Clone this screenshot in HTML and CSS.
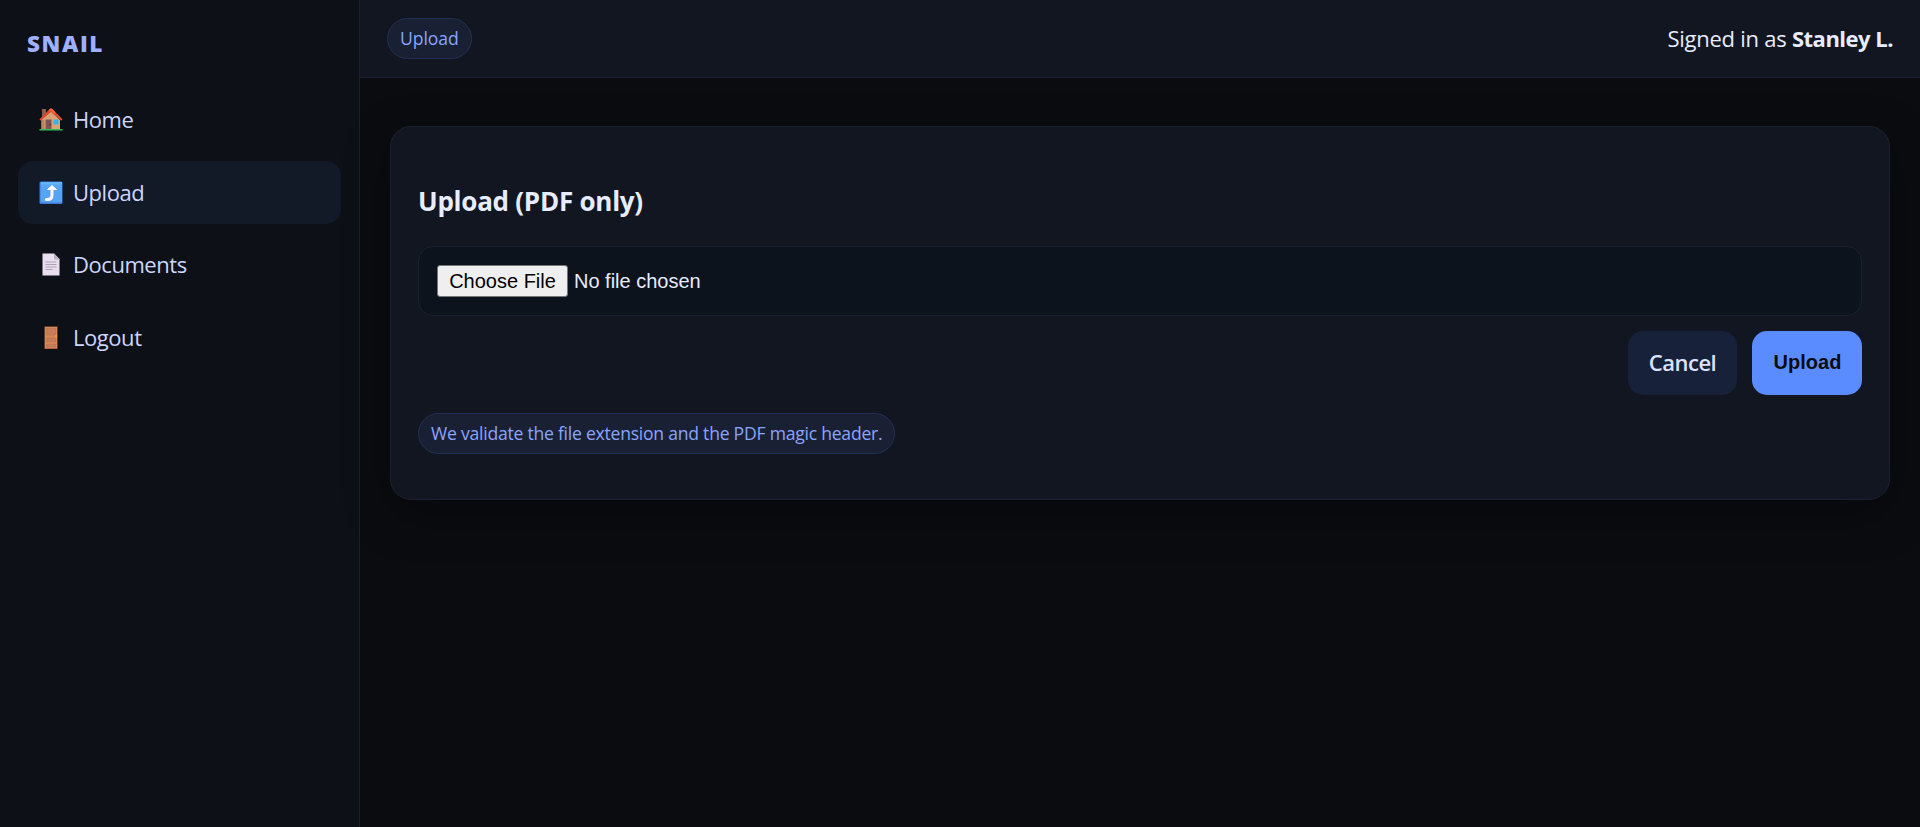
FILE: index.html
```html
<!DOCTYPE html>
<html lang="en">
<head>
  <meta charset="UTF-8">
  <title>Snail - Upload</title>
  <link rel="stylesheet" href="styles.css">
</head>
<body>
  <div class="layout">
    <aside class="sidebar">
      <div class="brand">SNAIL</div>
      <nav class="nav">
        <a class="home" href="#">
          <svg viewBox="0 0 24 24"><path fill="#8a5d4c" d="M3 1h4v9H3z"/><path fill="#d9a377" d="M2.5 11.500 12 3l9 9v9.500H2.500z"/><path fill="#b98263" d="M2.500 12h3v9.500h-3z"/><path fill="#e2472f" d="M.5 11.200 11 .8q1-.8 2 0l10.500 10.400-1.200 1.600L12 4 1.700 12.800z"/><path fill="#f8643d" d="M9.500 2.300 11 .8q1-.8 2 0l3.500 3.500-1 2L12 3z"/><path fill="#805453" d="M6.500 11.500h6v9.800h-6z"/><circle cx="11.300" cy="16.500" r=".7" fill="#432d2f"/><path fill="#35b5ee" d="M14.500 11.500h5v5h-5z"/><path fill="#2fbd5c" d="M.5 21h23v1.500H.5z"/></svg>
          <span>Home</span>
        </a>
        <a class="upload active" href="#">
          <svg viewBox="0 0 24 24"><rect x=".5" y=".5" width="23" height="22.500" rx="1.500" fill="#4079d1"/><path fill="#55a5f4" d="M1.500 1h21.500v20.500H1.500z"/><path fill="#62b6fc" d="M2 1h21v2.500H2z"/><path fill="none" stroke="#fff6ff" stroke-width="3" stroke-linecap="round" d="M7.500 18.500h1c3 0 4.500-1.500 4.500-4.500V8"/><path fill="#fff6ff" stroke="#fff6ff" stroke-linejoin="round" d="m13 4.500 4.500 4h-9z"/></svg>
          <span>Upload</span>
        </a>
        <a class="documents" href="#">
          <svg viewBox="0 0 24 24"><path fill="#e9deef" d="M3.500.5h11.500L20.500 6v16.500h-17z"/><path fill="#b9b0bf" d="M15 .5 20.500 6v.5H16.500q-1.500 0-1.500-1.500z"/><path stroke="#aba3b3" d="M6.500 9h11M6.500 11.500h11M6.500 14h11M6.500 16.500h7"/></svg>
          <span>Documents</span>
        </a>
        <a class="logout" href="#">
          <svg viewBox="0 0 24 24"><path fill="#b5633f" d="M5.500.5h13V23h-13z"/><path fill="#d18a5d" d="M6 1h12v21H6z"/><path fill="#c77e58" stroke="#bb7050" stroke-width=".7" d="M7.500 2.500h9v6.500h-9zM7.500 12h9v4h-9zM7.500 18h9v3h-9z"/><path stroke="#dc8855" d="M7 10.500h10M7 17h10"/><circle cx="17" cy="10" r=".9" fill="#f6a52a"/></svg>
          <span>Logout</span>
        </a>
      </nav>
    </aside>
    <div class="main">
      <header class="topbar">
        <span class="badge badge-top">Upload</span>
        <div class="user"><span>Signed in as</span> <strong>Stanley L.</strong></div>
      </header>
      <main class="content">
        <section class="card">
          <h3>Upload (PDF only)</h3>
          <form class="form">
            <input class="file" type="file" accept=".pdf">
            <div class="actions">
              <a class="btn btn-cancel" href="#">Cancel</a>
              <button class="btn btn-primary" type="button">Upload</button>
            </div>
          </form>
          <span class="badge badge-note">We validate the file extension and the PDF magic header.</span>
        </section>
      </main>
    </div>
  </div>
</body>
</html>
```

FILE: styles.css
```css
*{ box-sizing: border-box; }
body{
  margin: 0;
  background: #0b0c10;
  color: #e8ecff;
  font-family: "Open Sans", "Noto Sans", sans-serif;
  font-size: 22px;
  line-height: 30px;
}
a{ color: inherit; text-decoration: none; }
.layout{
  display: grid;
  grid-template-columns: 360px 1fr;
  min-height: 100vh;
}
.sidebar{
  padding: 27px 18px;
  background: #0d1117;
  border-right: 1px solid #1b2130;
}
.brand{
  padding-left: 9px;
  height: 34px;
  line-height: 34px;
  color: #9fb0ff;
  font-size: 22.5px;
  font-weight: 800;
  letter-spacing: 1.6px;
}
.nav{
  display: grid;
  gap: 9.5px;
  margin-top: 27px;
}
.nav a{
  display: flex;
  align-items: center;
  gap: 10px;
  height: 63px;
  padding: 0 21px;
  border-radius: 15px;
  color: #cdd6ff;
  letter-spacing: -.45px;
}
.nav span{ padding-bottom: 1px; }
.nav .active{ background: #121a28; }
.nav svg{
  width: 24px;
  height: 24px;
  margin-top: 1px;
}
.topbar{
  display: flex;
  align-items: center;
  justify-content: space-between;
  height: 78px;
  padding: 0 27px;
  background: #121620;
  border-bottom: 1px solid #1b2130;
}
.user{
  padding-bottom: 2px;
  letter-spacing: -.25px;
}
.user strong{ letter-spacing: -.5px; }
.badge{
  display: inline-block;
  height: 41px;
  padding: 0 12px;
  border: 1px solid #223055;
  border-radius: 21px;
  background: #1a2033;
  color: #8aa4ff;
  font-size: 17.6px;
  line-height: 39px;
  letter-spacing: -.25px;
}
.badge-top{ letter-spacing: -.1px; }
.content{ padding: 48px 30px; }
.card{
  height: 374px;
  padding: 57px 27px 45px;
  background: #121620;
  border: 1px solid #1b2130;
  border-radius: 21px;
  box-shadow: 0 15px 45px rgba(0,0,0,.35);
}
.card h3{
  margin: 0 0 28px;
  font-size: 26px;
  line-height: 34px;
  letter-spacing: -.25px;
}
.form{
  display: grid;
  gap: 15px;
  margin-bottom: 18px;
}
.file{
  width: 100%;
  height: 70px;
  padding: 18px;
  border: 1px solid #1b2130;
  border-radius: 15px;
  background: #0d131d;
  color: #e8ecff;
  font: 20px "Liberation Sans", Arial, sans-serif;
}
.file::file-selector-button{
  width: 131px;
  height: 32px;
  margin: 0 6px 0 0;
  padding: 0;
  border: 1px solid #767676;
  border-radius: 3px;
  background: #efefef;
  color: #000;
  font: inherit;
}
.actions{
  display: flex;
  justify-content: flex-end;
  gap: 15px;
}
.btn{
  height: 64px;
  border: 0;
  border-radius: 15px;
  text-align: center;
  font-weight: 600;
}
.btn-cancel{
  width: 109px;
  line-height: 62px;
  background: #18213a;
  color: #dbe4ff;
  letter-spacing: -.5px;
}
.btn-primary{
  width: 110px;
  padding: 0 0 2px 1px;
  background: #5b8cff;
  color: #0b0c10;
  font-family: "Liberation Sans", Arial, sans-serif;
  font-size: 20px;
}
```
